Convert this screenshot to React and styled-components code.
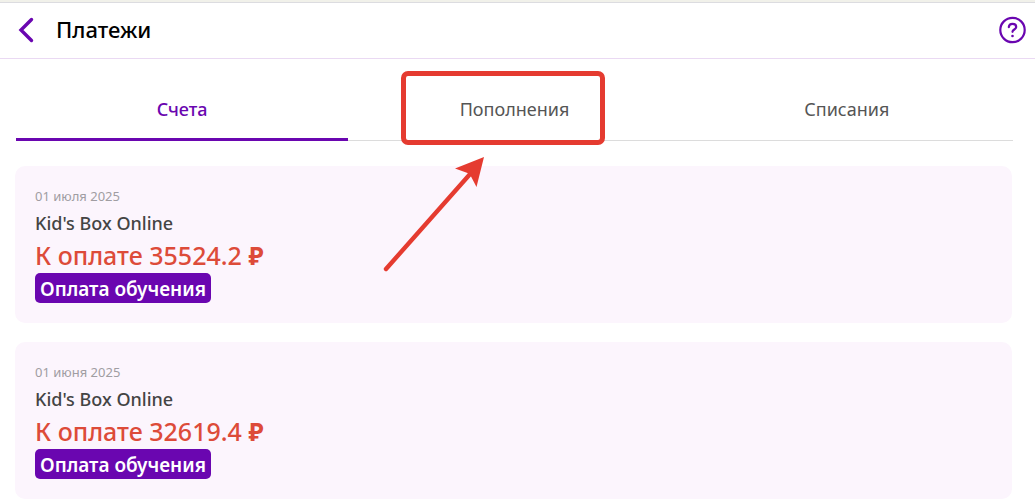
import React, { useState } from "react";
import styled, { createGlobalStyle } from "styled-components";

const purple = "#6a06b0";
const red = "#e53b30";

const GlobalStyle = createGlobalStyle`
  * { box-sizing: border-box; }
  body {
    margin: 0;
    background: #fff;
    color: #000;
    font-family: "Noto Sans", "Open Sans", sans-serif;
  }
  button { font-family: inherit; cursor: pointer; }
`;

const Page = styled.div`
  border-top: 2px solid #f1f1ea;
`;

const Header = styled.header`
  display: flex;
  align-items: center;
  height: 57px;
  padding: 0 8px 2px 15px;
  border-top: 1px solid #dcdce0;
  border-bottom: 1px solid #ead9f3;
`;

const IconButton = styled.button`
  display: flex;
  padding: 0;
  border: 0;
  background: none;
  color: ${purple};
`;

const Title = styled.h1`
  flex: 1;
  margin: 0 0 0 21px;
  font-size: 22px;
  line-height: 26px;
  padding-bottom: 2px;
  font-weight: 500;
`;

const Main = styled.main`
  padding: 19px 23px 0 15px;
`;

const Tabs = styled.div`
  display: grid;
  grid-template-columns: repeat(3, 1fr);
  height: 63px;
  margin: 0 -1px 25px 1px;
`;

const TabCell = styled.div`
  position: relative;
  display: flex;
`;

const Tab = styled.button`
  flex: 1;
  padding: 0 0 2px;
  border: 0;
  background: none;
  font-size: 18px;
  line-height: 24px;
  font-weight: ${(p) => (p.$active ? 500 : 400)};
  color: ${(p) => (p.$active ? purple : "#555")};
  box-shadow: inset 0 ${(p) => (p.$active ? `-3px ${purple}` : "-1px #dcdcdc")};
`;

const Highlight = styled.div`
  position: absolute;
  top: -7px;
  left: 53px;
  width: 204px;
  height: 74px;
  border: 5px solid ${red};
  border-radius: 7px;
  pointer-events: none;
`;

const Arrow = styled.svg`
  position: absolute;
  top: 78px;
  left: 35px;
  pointer-events: none;
`;

const CardList = styled.div`
  display: flex;
  flex-direction: column;
  gap: 19px;
`;

const Card = styled.article`
  display: flex;
  flex-direction: column;
  align-items: flex-start;
  padding: 19px 20px 20px;
  border-radius: 10px;
  background: #fcf5fd;
`;

const CardDate = styled.time`
  font-size: 13px;
  line-height: 22px;
  color: #a09da2;
`;

const CardTitle = styled.h2`
  margin: 0;
  font-size: 18px;
  line-height: 32px;
  font-weight: 500;
  color: #444;
`;

const Amount = styled.p`
  margin: 0 0 2px;
  font-size: 25px;
  line-height: 32px;
  font-weight: 500;
  color: #dd4b39;
`;

const Currency = styled.span`
  font-weight: 700;
`;

const PayButton = styled.button`
  height: 30px;
  padding: 2px 5px 0;
  border: 0;
  border-radius: 5px;
  background: ${purple};
  color: #fff;
  font-size: 19px;
  line-height: 28px;
  font-weight: 600;
`;

const tabs = ["Счета", "Пополнения", "Списания"];
const bills = [
  { date: "01 июля 2025", iso: "2025-07-01", sum: "35524.2" },
  { date: "01 июня 2025", iso: "2025-06-01", sum: "32619.4" },
];

export default function App() {
  const [active, setActive] = useState(0);
  return (
    <>
      <GlobalStyle />
      <Page>
        <Header>
          <IconButton aria-label="Назад">
            <svg width="20" height="26" viewBox="0 0 20 26" fill="none">
              <path d="M16.5 2.5 6 13 16.5 23.5" stroke="currentColor" strokeWidth="3.4" strokeLinecap="round" />
            </svg>
          </IconButton>
          <Title>Платежи</Title>
          <IconButton aria-label="Помощь">
            <svg width="28" height="28" viewBox="0 0 28 28" fill="none">
              <circle cx="13.5" cy="14" r="12.2" stroke="currentColor" strokeWidth="2.2" />
              <path d="M9.8 11.2C10 9 11.5 7.9 13.5 7.9c2.2 0 3.7 1.2 3.7 3.1 0 2.4-3.7 2.6-3.7 4.8" stroke="currentColor" strokeWidth="2.2" strokeLinecap="round" />
              <circle cx="13.5" cy="20" r="1.3" fill="currentColor" />
            </svg>
          </IconButton>
        </Header>
        <Main>
          <Tabs role="tablist">
            {tabs.map((name, i) => (
              <TabCell key={name} role="presentation">
                <Tab role="tab" aria-selected={active === i} $active={active === i} onClick={() => setActive(i)}>
                  {name}
                </Tab>
                {i === 1 && (
                  <>
                    <Highlight />
                    <Arrow width="104" height="118" viewBox="0 0 104 118" aria-hidden="true">
                      <path d="M3 113 88 17" stroke={red} strokeWidth="4.4" strokeLinecap="round" />
                      <path d="M101 1 72 12.5 84.5 17 87.5 19.5 93.5 31Z" fill={red} />
                    </Arrow>
                  </>
                )}
              </TabCell>
            ))}
          </Tabs>
          <CardList>
            {bills.map((b) => (
              <Card key={b.iso}>
                <CardDate dateTime={b.iso}>{b.date}</CardDate>
                <CardTitle>Kid's Box Online</CardTitle>
                <Amount>
                  К оплате {b.sum} <Currency>₽</Currency>
                </Amount>
                <PayButton>Оплата обучения</PayButton>
              </Card>
            ))}
          </CardList>
        </Main>
      </Page>
    </>
  );
}
